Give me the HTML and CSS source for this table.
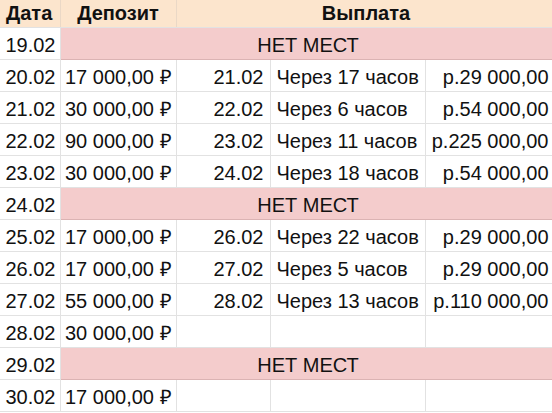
FILE: index.html
```html
<!DOCTYPE html>
<html lang="ru">
<head>
<meta charset="utf-8">
<link rel="stylesheet" href="styles.css">
</head>
<body>
<div class="sheet">
<table class="grid">
  <colgroup>
    <col class="c-date"><col class="c-dep"><col class="c-pdate"><col class="c-when"><col class="c-sum">
  </colgroup>
  <thead>
    <tr class="head">
      <th class="h-left">Дата</th>
      <th>Депозит</th>
      <th colspan="3">Выплата</th>
    </tr>
  </thead>
  <tbody>
    <tr class="full"><td class="num">19.02</td><td colspan="4" class="none">НЕТ МЕСТ</td></tr>
    <tr><td class="num">20.02</td><td class="num">17 000,00 ₽</td><td class="num pd">21.02</td><td class="txt">Через 17 часов</td><td class="num sum">р.29 000,00</td></tr>
    <tr><td class="num">21.02</td><td class="num">30 000,00 ₽</td><td class="num pd">22.02</td><td class="txt">Через 6 часов</td><td class="num sum">р.54 000,00</td></tr>
    <tr><td class="num">22.02</td><td class="num">90 000,00 ₽</td><td class="num pd">23.02</td><td class="txt">Через 11 часов</td><td class="num sum">р.225 000,00</td></tr>
    <tr><td class="num">23.02</td><td class="num">30 000,00 ₽</td><td class="num pd">24.02</td><td class="txt">Через 18 часов</td><td class="num sum">р.54 000,00</td></tr>
    <tr class="full"><td class="num">24.02</td><td colspan="4" class="none">НЕТ МЕСТ</td></tr>
    <tr><td class="num">25.02</td><td class="num">17 000,00 ₽</td><td class="num pd">26.02</td><td class="txt">Через 22 часов</td><td class="num sum">р.29 000,00</td></tr>
    <tr><td class="num">26.02</td><td class="num">17 000,00 ₽</td><td class="num pd">27.02</td><td class="txt">Через 5 часов</td><td class="num sum">р.29 000,00</td></tr>
    <tr><td class="num">27.02</td><td class="num">55 000,00 ₽</td><td class="num pd">28.02</td><td class="txt">Через 13 часов</td><td class="num sum">р.110 000,00</td></tr>
    <tr><td class="num">28.02</td><td class="num">30 000,00 ₽</td><td></td><td></td><td></td></tr>
    <tr class="full"><td class="num">29.02</td><td colspan="4" class="none">НЕТ МЕСТ</td></tr>
    <tr><td class="num">30.02</td><td class="num">17 000,00 ₽</td><td></td><td></td><td></td></tr>
  </tbody>
</table>
</div>
</body>
</html>
```
FILE: styles.css
```css
html, body {
  margin: 0;
  padding: 0;
  background: #ffffff;
  overflow: hidden;
}
.sheet {
  width: 552px;
  height: 413px;
  overflow: hidden;
}
.grid {
  border-collapse: collapse;
  table-layout: fixed;
  width: 556px;
  font-family: "Liberation Sans", Arial, sans-serif;
  font-size: 20px;
  color: #111111;
}
.c-date { width: 60px; }
.c-dep { width: 116px; }
.c-pdate { width: 94px; }
.c-when { width: 155px; }
.c-sum { width: 131px; }
.grid th, .grid td {
  border: 1px solid #e2e2e2;
  padding: 0 4px 2px 4px;
  line-height: 23px;
  white-space: nowrap;
  overflow: hidden;
  vertical-align: bottom;
}
.grid tr:first-child th { border-top: none; }
.grid th:first-child, .grid td:first-child { border-left: none; }
.head th {
  height: 25px;
  padding-bottom: 2px;
  background: #fce5cd;
  font-weight: bold;
  text-align: center;
  border-color: #ead8c6;
  border-bottom-color: #e2e2e2;
}
.grid .h-left { text-align: left; padding-left: 6px; }
.grid tbody td { height: 29px; }
.grid .num { text-align: right; }
.grid .pd { padding-right: 6px; }
.grid .sum { padding-right: 7px; }
.grid .txt { text-align: left; padding-left: 6px; }
.grid .none {
  background: #f4cccc;
  text-align: center;
  border: 1px solid #dbb3b3;
}
```
